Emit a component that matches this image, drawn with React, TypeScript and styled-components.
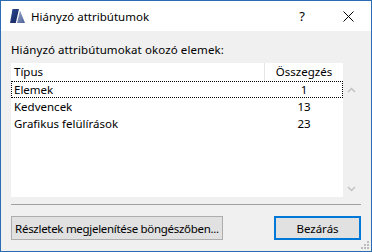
import styled, { createGlobalStyle } from "styled-components";

const GlobalStyle = createGlobalStyle`
  html, body {
    margin: 0;
    padding: 0;
    background: #ffffff;
  }
  body {
    font-family: "Noto Sans", "Open Sans", sans-serif;
    font-size: 11.5px;
    color: #000000;
  }
`;

const Window = styled.div`
  position: relative;
  width: 372px;
  height: 252px;
  box-sizing: border-box;
  border: 1px solid #2b6db2;
  background: #f0f0f0;
  display: flex;
  flex-direction: column;
`;

const TitleBar = styled.div`
  height: 30px;
  background: #ffffff;
  display: flex;
  align-items: center;
  padding-left: 9px;
  flex-shrink: 0;
`;

const TitleText = styled.div`
  margin-left: 6px;
  font-size: 11.5px;
  flex: 1;
`;

const CaptionButton = styled.div`
  width: 46px;
  height: 30px;
  display: flex;
  align-items: center;
  justify-content: center;
  font-size: 13px;
`;

const Body = styled.div`
  padding: 11px 10px 0 10px;
  display: flex;
  flex-direction: column;
`;

const Label = styled.div`
  line-height: 16px;
  height: 16px;
  margin-bottom: 5px;
  letter-spacing: 0.1px;
`;

const ListBox = styled.div`
  display: flex;
  height: 134px;
`;

const ListArea = styled.div`
  width: 332px;
  background: #ffffff;
  display: flex;
  flex-direction: column;
`;

const Row = styled.div<{ $focus?: boolean; $header?: boolean }>`
  display: grid;
  grid-template-columns: 253px 1px 78px;
  height: ${(p) => (p.$header ? "18px" : "17px")};
  line-height: ${(p) => (p.$header ? "18px" : "17px")};
  box-sizing: border-box;
  outline: ${(p) => (p.$focus ? "1px dotted #000000" : "none")};
  outline-offset: -1px;
`;

const NameCell = styled.div`
  padding-left: 3px;
  white-space: nowrap;
`;

const Divider = styled.div<{ $show?: boolean }>`
  background: ${(p) => (p.$show ? "#e5e5e5" : "transparent")};
`;

const ValueCell = styled.div`
  text-align: center;
  white-space: nowrap;
`;

const ScrollBar = styled.div`
  width: 17px;
  padding-top: 18px;
  display: flex;
  flex-direction: column;
  justify-content: space-between;
`;

const ScrollButton = styled.div`
  height: 17px;
  display: flex;
  align-items: center;
  justify-content: center;
`;

const Separator = styled.div`
  height: 1px;
  background: #a0a0a0;
  margin-top: 7px;
`;

const ButtonRow = styled.div`
  display: flex;
  justify-content: space-between;
  margin-top: 11px;
`;

const Button = styled.div<{ $default?: boolean; $w: number; $tight?: boolean }>`
  width: ${(p) => p.$w}px;
  height: 24px;
  box-sizing: border-box;
  background: #e1e1e1;
  border: ${(p) => (p.$default ? "2px solid #0078d7" : "1px solid #adadad")};
  display: flex;
  align-items: center;
  justify-content: center;
  white-space: nowrap;
  letter-spacing: ${(p) => (p.$tight ? "-0.3px" : "0")};
`;

const Grip = styled.svg`
  position: absolute;
  right: 1px;
  bottom: 1px;
`;

const rows = [
  { name: "Elemek", count: 1 },
  { name: "Kedvencek", count: 13 },
  { name: "Grafikus felülírások", count: 23 },
];

const AppIcon = () => (
  <svg width="15" height="14" viewBox="0 0 15 14">
    <defs>
      <linearGradient id="dk" x1="0" y1="0" x2="1" y2="1">
        <stop offset="0" stopColor="#2c4a94" />
        <stop offset="1" stopColor="#14215a" />
      </linearGradient>
      <linearGradient id="lt" x1="0" y1="0" x2="1" y2="1">
        <stop offset="0" stopColor="#9aa8cc" />
        <stop offset="1" stopColor="#4d5f98" />
      </linearGradient>
    </defs>
    <polygon points="2.5,0 9,0 5.8,14 0,14" fill="url(#dk)" />
    <polygon points="10,1.5 15,14 7,14" fill="url(#lt)" />
  </svg>
);

const CloseIcon = () => (
  <svg width="11" height="11" viewBox="0 0 11 11">
    <path d="M0.5 0.5 L10.5 10.5 M10.5 0.5 L0.5 10.5" stroke="#000000" strokeWidth="1" />
  </svg>
);

const Chevron = ({ up }: { up?: boolean }) => (
  <svg width="9" height="6" viewBox="0 0 9 6">
    <polyline
      points={up ? "1,5 4.5,1.5 8,5" : "1,1 4.5,4.5 8,1"}
      fill="none"
      stroke="#c2c2c2"
      strokeWidth="1.5"
    />
  </svg>
);

export default function App() {
  return (
    <>
      <GlobalStyle />
      <Window>
        <TitleBar>
          <AppIcon />
          <TitleText>Hiányzó attribútumok</TitleText>
          <CaptionButton>?</CaptionButton>
          <CaptionButton>
            <CloseIcon />
          </CaptionButton>
        </TitleBar>
        <Body>
          <Label>Hiányzó attribútumokat okozó elemek:</Label>
          <ListBox>
            <ListArea>
              <Row $header>
                <NameCell>Típus</NameCell>
                <Divider $show />
                <ValueCell>Összegzés</ValueCell>
              </Row>
              {rows.map((r, i) => (
                <Row key={r.name} $focus={i === 0}>
                  <NameCell>{r.name}</NameCell>
                  <Divider />
                  <ValueCell>{r.count}</ValueCell>
                </Row>
              ))}
            </ListArea>
            <ScrollBar>
              <ScrollButton>
                <Chevron up />
              </ScrollButton>
              <ScrollButton>
                <Chevron />
              </ScrollButton>
            </ScrollBar>
          </ListBox>
          <Separator />
          <ButtonRow>
            <Button $w={212} $tight>
              Részletek megjelenítése böngészőben...
            </Button>
            <Button $w={87} $default>
              Bezárás
            </Button>
          </ButtonRow>
        </Body>
        <Grip width="10" height="10" viewBox="0 0 10 10">
          {[
            [7, 1],
            [4, 4],
            [7, 4],
            [1, 7],
            [4, 7],
            [7, 7],
          ].map(([x, y]) => (
            <rect key={`${x}-${y}`} x={x} y={y} width="2" height="2" fill="#bdbdbd" />
          ))}
        </Grip>
      </Window>
    </>
  );
}
